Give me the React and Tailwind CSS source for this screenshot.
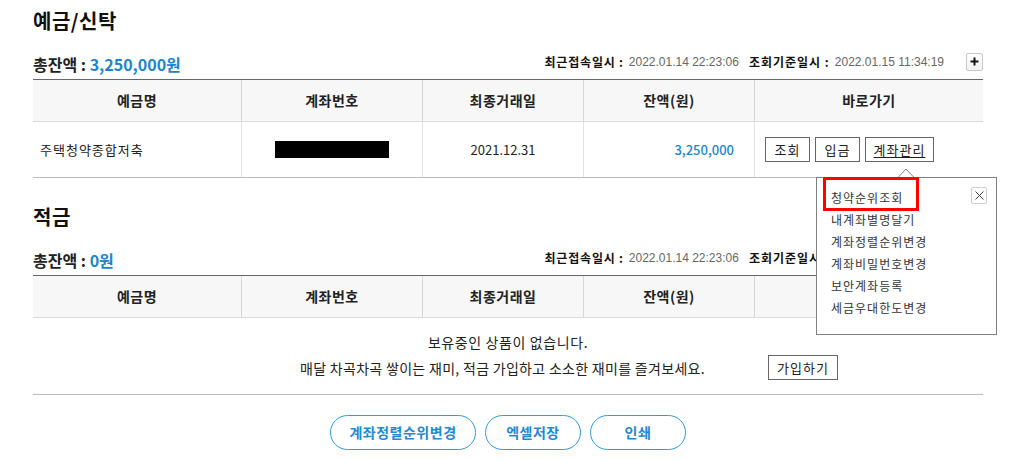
const COLS = "grid grid-cols-[208px_181px_161px_171px_229px]";

function Summary({ total }) {
  return (
    <div className="flex h-[38px] items-stretch justify-between">
      <div className="self-end pb-[5px] text-[16px] font-bold leading-[20px] text-[#222]">
        총잔액 : <span className="text-[#1a86d3]">{total}</span>
      </div>
      <div className="flex items-center pt-[3px] text-[12px] leading-[18px]">
        <span className="font-bold tracking-[0.8px] text-[#111]">최근접속일시 :</span>
        <span className="ml-[5px] text-[#666] font-['Liberation_Sans',sans-serif]">2022.01.14 22:23:06</span>
        <span className="ml-[10px] font-bold tracking-[1px] text-[#111]">조회기준일시 :</span>
        <span className="ml-[5px] text-[#666] font-['Liberation_Sans',sans-serif]">2022.01.15 11:34:19</span>
        <button className="ml-[22px] flex h-[18px] w-[17px] items-center justify-center rounded-[2px] border border-[#c8c8c8] bg-gradient-to-b from-white to-[#f1f1f1]">
          <svg width="9" height="9" viewBox="0 0 9 9">
            <path d="M4.5 0.5v8M0.5 4.5h8" stroke="#111" strokeWidth="2" />
          </svg>
        </button>
      </div>
    </div>
  );
}

function Header() {
  const heads = ["예금명", "계좌번호", "최종거래일", "잔액(원)", "바로가기"];
  return (
    <div className={`${COLS} h-[43px] border-t border-b border-t-[#666] border-b-[#dcdcdc] bg-[#f7f7f7]`}>
      {heads.map((h, i) => (
        <div
          key={h}
          className={`flex items-center justify-center text-[14px] font-semibold tracking-[0.5px] text-[#222] ${i > 0 ? "border-l border-[#d6d6d6]" : ""}`}
        >
          {h}
        </div>
      ))}
    </div>
  );
}

function SmallBtn({ children, underline, w }) {
  return (
    <button
      className={`${w} flex h-[25px] items-center justify-center border border-[#666] bg-white text-[13px] leading-none tracking-[1px] text-[#222] ${underline ? "underline underline-offset-2" : ""}`}
    >
      {children}
    </button>
  );
}

function Title({ children }) {
  return (
    <div className="flex h-[41px] items-center">
      <h2 className="text-[20px] font-bold leading-[28px] tracking-[0.5px] text-[#111]">{children}</h2>
    </div>
  );
}

export default function App() {
  const menu = ["청약순위조회", "내계좌별명달기", "계좌정렬순위변경", "계좌비밀번호변경", "보안계좌등록", "세금우대한도변경"];
  return (
    <div className="relative h-[462px] w-[1012px] overflow-hidden bg-white font-['Noto_Sans_CJK_KR','Noto_Sans',sans-serif] text-[#222]">
      <div className="ml-[33px] w-[950px]">
        {/* 예금/신탁 */}
        <Title>예금/신탁</Title>
        <Summary total="3,250,000원" />
        <Header />
        <div className={`${COLS} h-[56px] border-b border-[#bbb]`}>
          <div className="flex items-center pl-[7px] text-[13px] tracking-[1px]">주택청약종합저축</div>
          <div className="flex items-center justify-center border-l border-[#e2e2e2]">
            <div className="h-[17px] w-[114px] bg-black" />
          </div>
          <div className="flex items-center justify-center border-l border-[#e2e2e2] text-[13px]">2021.12.31</div>
          <div className="flex items-center justify-end border-l border-[#e2e2e2] pr-[20px] text-[13px] font-medium text-[#1a86d3]">
            3,250,000
          </div>
          <div className="flex items-center gap-[5px] border-l border-[#e2e2e2] pl-[10px]">
            <SmallBtn w="w-[45px]">조회</SmallBtn>
            <SmallBtn w="w-[45px]">입금</SmallBtn>
            <SmallBtn w="w-[69px]" underline>
              계좌관리
            </SmallBtn>
          </div>
        </div>

        {/* 적금 */}
        <div className="mt-[18px]">
          <Title>적금</Title>
          <Summary total="0원" />
          <Header />
          <div className="border-b border-[#bbb] pt-[13px] pb-[14px] text-[13px]">
            <div className="text-center text-[14px] leading-[22px] tracking-[0.6px]">보유중인 상품이 없습니다.</div>
            <div className="mt-[2px] grid h-[25px] grid-cols-[1fr_auto_1fr] items-center pr-[11px]">
              <div />
              <div className="text-[14px] leading-[22px] tracking-[0.3px]">
                매달 차곡차곡 쌓이는 재미, 적금 가입하고 소소한 재미를 즐겨보세요.
              </div>
              <div className="flex pl-[63px]">
                <button className="flex h-[25px] w-[70px] items-center justify-center border border-[#666] bg-white text-[13px] leading-none tracking-[1px] text-[#222]">
                  가입하기
                </button>
              </div>
            </div>
          </div>
        </div>

        {/* bottom buttons */}
        <div className="mt-[20px] flex justify-center gap-[9px]">
          {[
            ["계좌정렬순위변경", "w-[146px]"],
            ["엑셀저장", "w-[96px]"],
            ["인쇄", "w-[96px]"],
          ].map(([t, w]) => (
            <button
              key={t}
              className={`${w} flex h-[35px] items-center justify-center rounded-full border border-[#2b9be3] bg-white text-[14px] font-bold tracking-[0.5px] text-[#1f89d5]`}
            >
              {t}
            </button>
          ))}
        </div>
      </div>

      {/* 계좌관리 popup */}
      <div className="absolute left-[816px] top-[177px] h-[158px] w-[181px] border border-[#808080] bg-white">
        <svg className="absolute left-[80px] top-[-10px]" width="18" height="11" viewBox="0 0 18 11">
          <polygon points="0,10.5 9,1 18,10.5" fill="white" stroke="#808080" strokeWidth="1" />
          <rect x="1" y="10" width="16" height="1.5" fill="white" />
        </svg>
        <div className="pl-[14px] pt-[9px]">
          {menu.map((m) => (
            <div key={m} className="text-[12px] leading-[22px] tracking-[1px] text-[#333]">
              {m}
            </div>
          ))}
        </div>
        <button className="absolute left-[154px] top-[9px] flex h-[17px] w-[16px] items-center justify-center rounded-[2px] border border-[#cfcfcf] bg-white">
          <svg width="9" height="9" viewBox="0 0 9 9">
            <path d="M0.5 0.5l8 8M8.5 0.5l-8 8" stroke="#444" strokeWidth="1" />
          </svg>
        </button>
        <div className="absolute left-[6px] top-[-1px] h-[34px] w-[96px] border-[3px] border-[#ff0000]" />
      </div>
    </div>
  );
}
